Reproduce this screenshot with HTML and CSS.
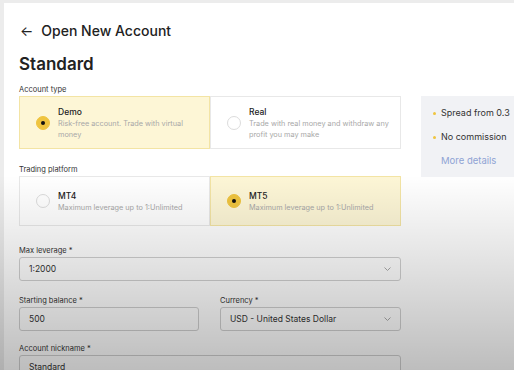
FILE: index.html
```html
<!DOCTYPE html>
<html lang="en">
<head>
  <meta charset="UTF-8">
  <meta name="viewport" content="width=device-width, initial-scale=1.0">
  <title>Open New Account</title>
  <link rel="stylesheet" href="styles.css">
</head>
<body>
  <div class="pagina">
    <div class="columna">
      <div class="cabecera">
        <span class="flecha-atras">&larr;</span>
        <h1>Open New Account</h1>
      </div>
      <h2>Standard</h2>

      <div class="etiqueta">Account type</div>
      <div class="opciones alta">
        <div class="opcion activa">
          <span class="radio"></span>
          <div class="opcion-texto">
            <div class="opcion-titulo">Demo</div>
            <div class="opcion-desc">Risk-free account. Trade with virtual money</div>
          </div>
        </div>
        <div class="opcion">
          <span class="radio"></span>
          <div class="opcion-texto">
            <div class="opcion-titulo">Real</div>
            <div class="opcion-desc">Trade with real money and withdraw any profit you may make</div>
          </div>
        </div>
      </div>

      <div class="etiqueta plataforma">Trading platform</div>
      <div class="opciones">
        <div class="opcion">
          <span class="radio"></span>
          <div class="opcion-texto">
            <div class="opcion-titulo">MT4</div>
            <div class="opcion-desc">Maximum leverage up to 1:Unlimited</div>
          </div>
        </div>
        <div class="opcion activa">
          <span class="radio"></span>
          <div class="opcion-texto">
            <div class="opcion-titulo">MT5</div>
            <div class="opcion-desc">Maximum leverage up to 1:Unlimited</div>
          </div>
        </div>
      </div>

      <div class="campo apalancamiento">
        <div class="etiqueta">Max leverage *</div>
        <div class="caja">
          <span>1:2000</span>
          <svg class="chevron" width="7" height="4" viewBox="0 0 7 4"><polyline points="0.5,0.5 3.5,3.5 6.5,0.5" fill="none" stroke="#aaa" stroke-width="1"/></svg>
        </div>
      </div>

      <div class="fila">
        <div class="campo">
          <div class="etiqueta">Starting balance *</div>
          <div class="caja"><span>500</span></div>
        </div>
        <div class="campo">
          <div class="etiqueta">Currency *</div>
          <div class="caja">
            <span>USD - United States Dollar</span>
            <svg class="chevron" width="7" height="4" viewBox="0 0 7 4"><polyline points="0.5,0.5 3.5,3.5 6.5,0.5" fill="none" stroke="#aaa" stroke-width="1"/></svg>
          </div>
        </div>
      </div>

      <div class="campo apodo">
        <div class="etiqueta">Account nickname *</div>
        <div class="caja"><span>Standard</span></div>
      </div>
    </div>

    <div class="lateral">
      <div class="punto">Spread from 0.3</div>
      <div class="punto">No commission</div>
      <a class="detalles">More details</a>
    </div>
  </div>
  <div class="sombra"></div>
</body>
</html>
```

FILE: styles.css
```css
body {
  margin: 0;
  padding: 3px 0 0 4px;
  background-color: #ececec;
  font-family: 'Inter', 'Liberation Sans', sans-serif;
  color: #222;
  overflow: hidden;
  height: 367px;
}

.pagina {
  display: flex;
  gap: 20px;
  background-color: #fff;
  padding: 0 0 0 15px;
  height: 100%;
}

.columna {
  width: 382px;
  display: flex;
  flex-direction: column;
}

.cabecera {
  display: flex;
  align-items: center;
  gap: 8px;
  margin-top: 19px;
  height: 20px;
}

.flecha-atras {
  font-size: 14px;
  line-height: 1;
  padding-left: 1px;
}

h1 {
  margin: 0;
  font-size: 14px;
  font-weight: 500;
}

h2 {
  margin: 14px 0 0;
  font-size: 17px;
  font-weight: 600;
  line-height: 22px;
}

.etiqueta {
  font-size: 7.5px;
  color: #333;
  line-height: 10px;
  margin-top: 10px;
}

.etiqueta.plataforma {
  margin-top: 16px;
}

/* Tarjetas de opciones */
.opciones {
  display: flex;
  margin-top: 1px;
}

.opcion {
  flex: 1;
  display: flex;
  align-items: center;
  gap: 8px;
  height: 50px;
  box-sizing: border-box;
  padding: 0 6px 0 16px;
  border: 1px solid #e8e8e8;
  background-color: #fff;
}

.opciones.alta .opcion {
  height: 53px;
}

.opcion.activa {
  background-color: #fdf6d6;
  border-color: #f3e4a4;
}

.radio {
  flex: none;
  width: 12px;
  height: 12px;
  border-radius: 50%;
  border: 1px solid #dcdcdc;
  background-color: #fff;
  display: flex;
  align-items: center;
  justify-content: center;
}

.opcion.activa .radio {
  background-color: #efc43f;
  border-color: #efc43f;
}

.opcion.activa .radio::after {
  content: '';
  width: 4px;
  height: 4px;
  border-radius: 50%;
  background-color: #111;
}

.opcion-titulo {
  font-size: 8.5px;
  font-weight: 500;
  line-height: 12px;
  color: #222;
}

.opcion-desc {
  font-size: 7.3px;
  line-height: 11px;
  color: #a8a8a8;
  max-width: 146px;
}

/* Campos del formulario */
.campo {
  display: flex;
  flex-direction: column;
}

.campo .etiqueta {
  margin-top: 0;
}

.apalancamiento {
  margin-top: 20px;
}

.caja {
  display: flex;
  align-items: center;
  justify-content: space-between;
  height: 24px;
  box-sizing: border-box;
  margin-top: 1px;
  padding: 0 9px;
  border: 1px solid #d0d0d0;
  border-radius: 3px;
  font-size: 8.5px;
  color: #333;
}

.fila {
  display: grid;
  grid-template-columns: 180px 181px;
  gap: 21px;
  margin-top: 15px;
}

.apodo {
  margin-top: 13px;
}

.chevron {
  margin-right: 0;
}

/* Panel lateral */
.lateral {
  align-self: flex-start;
  margin-top: 93px;
  width: 110px;
  height: 81px;
  box-sizing: border-box;
  padding: 11px 0 0 20px;
  background-color: #f1f2f5;
}

.punto {
  position: relative;
  font-size: 9px;
  line-height: 12px;
  color: #333;
  margin-bottom: 12px;
}

.punto::before {
  content: '';
  position: absolute;
  left: -8px;
  top: 5px;
  width: 3px;
  height: 3px;
  border-radius: 50%;
  background-color: #efc43f;
}

.detalles {
  display: block;
  font-size: 9.5px;
  line-height: 12px;
  color: #8fa3d4;
}

/* Oscurecimiento inferior sobre toda la pagina */
.sombra {
  position: absolute;
  left: 0;
  top: 0;
  width: 100%;
  height: 370px;
  pointer-events: none;
  background: linear-gradient(to bottom, rgba(0,0,0,0) 175px, rgba(0,0,0,0.1) 255px, rgba(0,0,0,0.26) 370px);
}
```
